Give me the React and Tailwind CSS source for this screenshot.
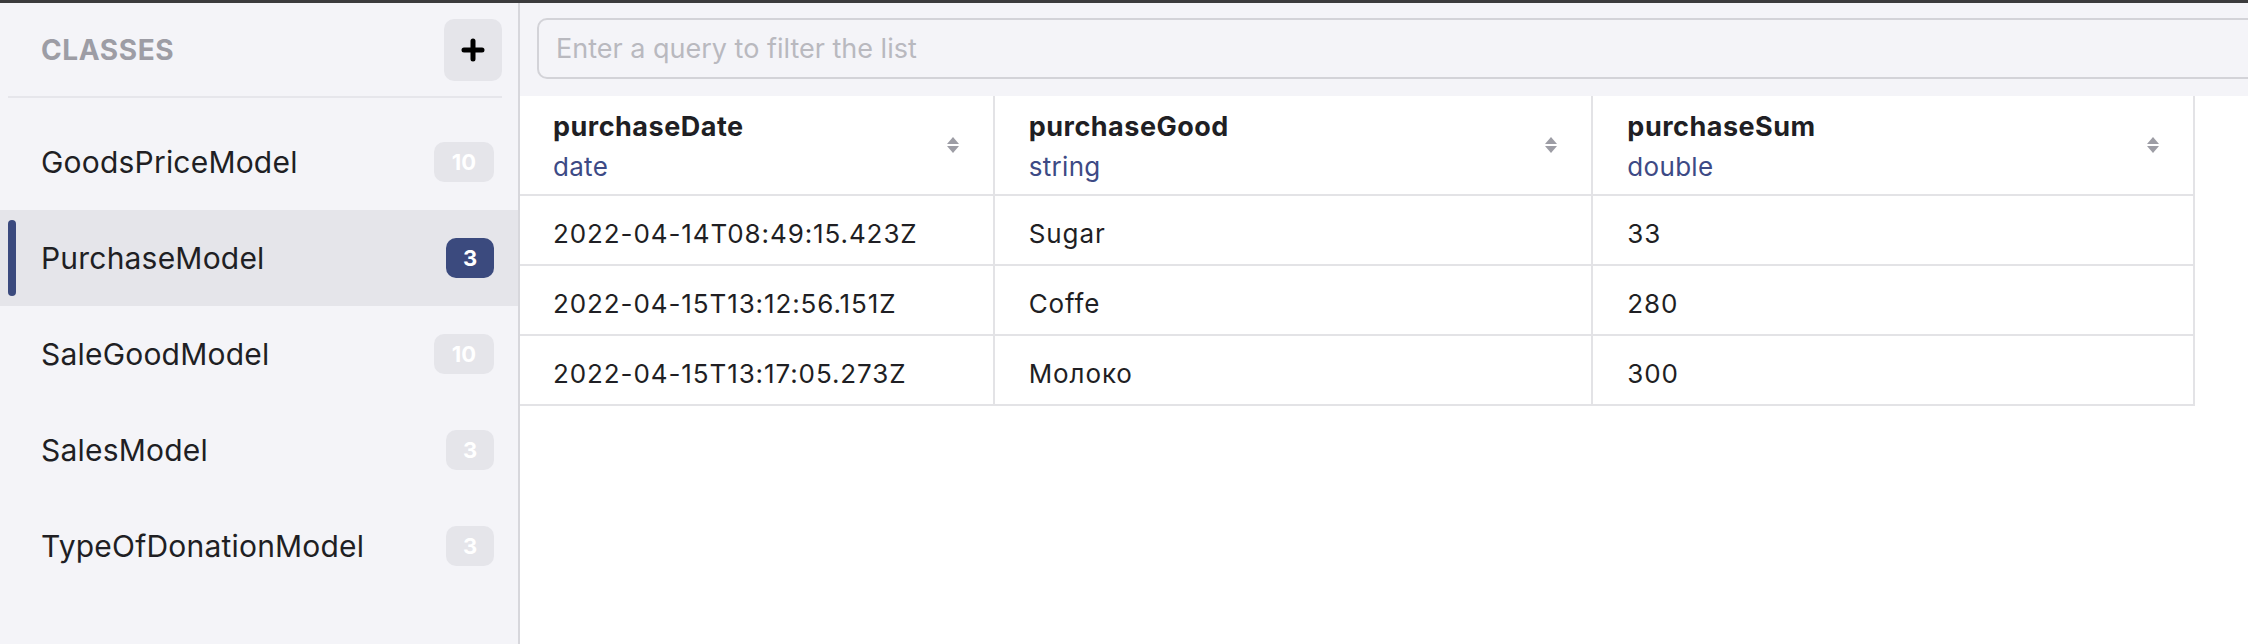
import React from 'react';

const classes = [
    { name: 'GoodsPriceModel', count: 10 },
    { name: 'PurchaseModel', count: 3, active: true },
    { name: 'SaleGoodModel', count: 10 },
    { name: 'SalesModel', count: 3 },
    { name: 'TypeOfDonationModel', count: 3 },
];

const columns = [
    { name: 'purchaseDate', type: 'date', width: 'w-[476px]' },
    { name: 'purchaseGood', type: 'string', width: 'w-[599px]' },
    { name: 'purchaseSum', type: 'double', width: 'w-[600px]' },
];

const rows = [
    ['2022-04-14T08:49:15.423Z', 'Sugar', '33'],
    ['2022-04-15T13:12:56.151Z', 'Coffe', '280'],
    ['2022-04-15T13:17:05.273Z', 'Молоко', '300'],
];

const SortIcon = () => (
    <svg width="14" height="18" viewBox="0 0 14 18" className="shrink-0">
        <path d="M1 8 L7 1 L13 8 Z" fill="#9d9da5" />
        <path d="M1 10 L13 10 L7 17 Z" fill="#9d9da5" />
    </svg>
);

const PlusIcon = () => (
    <svg width="24" height="24" viewBox="0 0 24 24">
        <path d="M12 3 V21 M3 12 H21" stroke="#000" strokeWidth="5" strokeLinecap="round" />
    </svg>
);

const App = () => {
    return (
        <div className="w-[2248px] h-[644px] flex flex-col bg-white overflow-hidden font-['Inter',sans-serif] text-[#1f1f24]">
            <div className="h-[3px] bg-[#3b3b3d] shrink-0" />
            <div className="flex flex-1 min-h-0">
                {/* sidebar */}
                <aside className="w-[520px] shrink-0 bg-[#f4f4f8] border-r-2 border-[#d7d7dc] flex flex-col">
                    <div className="h-[93px] flex items-center justify-between pl-[41px] pr-[16px]">
                        <span className="text-[28px] font-bold tracking-[0.6px] text-[#9d9da5]">CLASSES</span>
                        <button className="w-[58px] h-[62px] rounded-[10px] bg-[#e5e5ea] flex items-center justify-center">
                            <PlusIcon />
                        </button>
                    </div>
                    <div className="h-[2px] ml-[8px] mr-[16px] bg-[#e6e6eb]" />
                    <div className="pt-[16px] flex flex-col">
                        {classes.map((c) => (
                            <div
                                key={c.name}
                                className={`relative h-[96px] flex items-center justify-between pl-[41px] pr-[24px] ${c.active ? 'bg-[#e5e5ea]' : ''}`}
                            >
                                {c.active && (
                                    <div className="absolute left-[8px] top-[10px] bottom-[10px] w-[8px] rounded-full bg-[#3b4a7e]" />
                                )}
                                <span className="text-[30px] tracking-[0.2px] text-[#1f1f24]">{c.name}</span>
                                <span
                                    className={`h-[40px] rounded-[10px] flex items-center justify-center text-[22px] font-bold text-white ${c.count > 9 ? 'w-[60px]' : 'w-[48px]'} ${c.active ? 'bg-[#3b4a7e]' : 'bg-[#e5e5ea]'}`}
                                >
                                    {c.count}
                                </span>
                            </div>
                        ))}
                    </div>
                </aside>

                {/* main */}
                <main className="flex-1 min-w-0 flex flex-col overflow-hidden">
                    <div className="h-[93px] shrink-0 bg-[#f4f4f8] pl-[17px] pt-[15px]">
                        <input
                            type="text"
                            placeholder="Enter a query to filter the list"
                            className="w-[1800px] h-[61px] rounded-[10px] border-2 border-[#d3d3d8] bg-[#f4f4f8] pl-[17px] text-[27px] placeholder:text-[#b9b9bf] outline-none"
                        />
                    </div>

                    <div className="w-[1676px] -ml-[1px] border-r-2 border-[#e3e3e6]">
                        <div className="flex h-[100px] border-b-2 border-[#e3e3e6]">
                            {columns.map((col, i) => (
                                <div
                                    key={col.name}
                                    className={`${col.width} flex items-center justify-between pl-[34px] pr-[33px] ${i < 2 ? 'border-r-2 border-[#e3e3e6]' : ''}`}
                                >
                                    <div className="flex flex-col pt-[4px]">
                                        <span className="text-[27px] font-bold leading-[40px] tracking-[0.5px] text-[#1f1f24]">{col.name}</span>
                                        <span className="text-[26px] leading-[40px] tracking-[0.3px] text-[#3d4a85]">{col.type}</span>
                                    </div>
                                    <SortIcon />
                                </div>
                            ))}
                        </div>
                        {rows.map((row, r) => (
                            <div key={r} className="flex h-[70px] border-b-2 border-[#e3e3e6]">
                                {row.map((cell, i) => (
                                    <div
                                        key={i}
                                        className={`${columns[i].width} flex items-center pl-[34px] pt-[6px] text-[26px] tracking-[0.9px] text-[#1f1f24] ${i < 2 ? 'border-r-2 border-[#e3e3e6]' : ''}`}
                                    >
                                        {cell}
                                    </div>
                                ))}
                            </div>
                        ))}
                    </div>
                </main>
            </div>
        </div>
    );
};

export default App;
